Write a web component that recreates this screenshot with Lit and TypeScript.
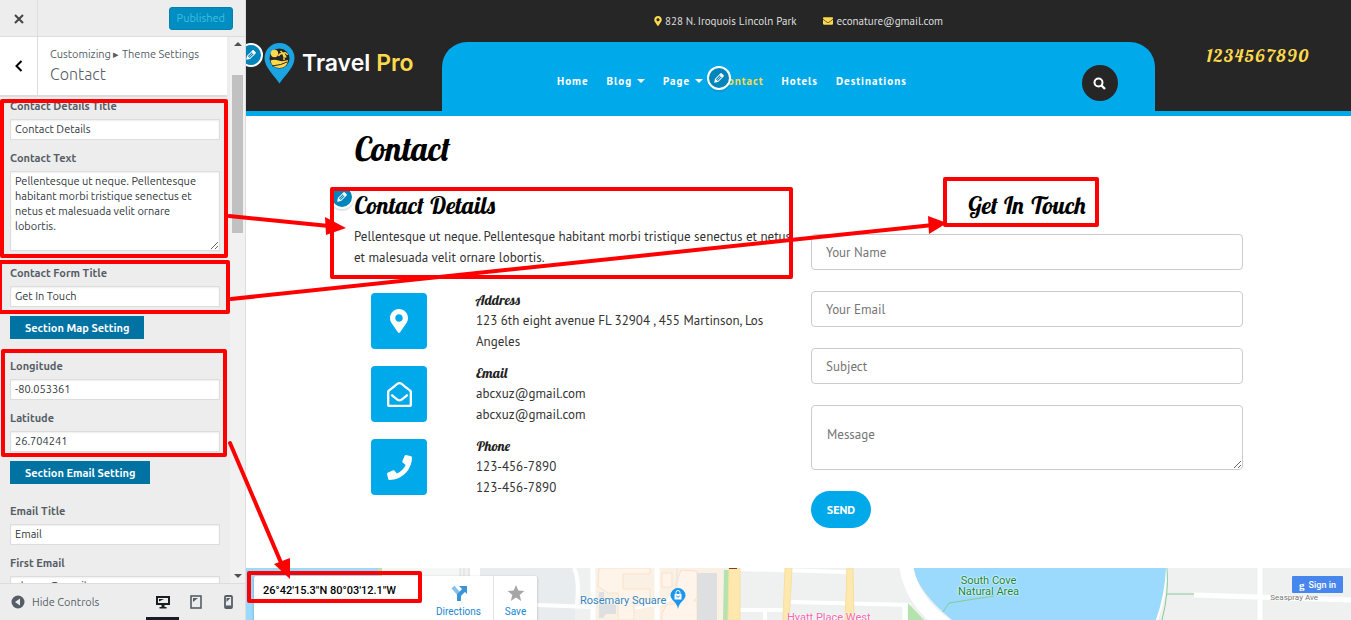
import { LitElement, html, css, svg } from "lit";
import { customElement } from "lit/decorators.js";

const pencil = html`<svg class="pencil" viewBox="0 0 20 20" width="14" height="14" aria-hidden="true">
  <path fill="currentColor" d="M13.89 3.39l2.71 2.72c.46.46.42 1.24.03 1.64l-8.01 8.02-5.56 1.16 1.16-5.58s7.6-7.63 7.99-8.03c.39-.39 1.22-.39 1.68.07zm-2.73 2.79l-5.59 5.61 1.11 1.11 5.54-5.65zm-2.97 8.23l5.58-5.6-1.07-1.08-5.59 5.6z"/>
</svg>`;

const markerPath = "M172.27 501.67C26.97 291.03 0 269.41 0 192 0 85.96 85.96 0 192 0s192 85.96 192 192c0 77.41-26.97 99.03-172.27 309.67-9.53 13.77-29.93 13.77-39.46 0zM192 272c44.18 0 80-35.82 80-80s-35.82-80-80-80-80 35.82-80 80 35.82 80 80 80z";
const envelopePath = "M502.3 190.8c3.9-3.1 9.7-.2 9.7 4.7V400c0 26.5-21.5 48-48 48H48c-26.5 0-48-21.5-48-48V195.600c0-5 5.700-7.800 9.700-4.700 22.400 17.400 52.100 39.500 154.100 113.600 21.100 15.400 56.700 47.800 92.200 47.600 35.700.300 72-32.800 92.300-47.600 102-74.100 131.600-96.300 154-113.700zM256 320c23.200.400 56.600-29.200 73.400-41.400 132.700-96.300 142.800-104.700 173.400-128.700 5.800-4.500 9.200-11.500 9.200-18.900v-19c0-26.500-21.500-48-48-48H48c-26.500 0-48 21.500-48 48v19c0 7.400 3.400 14.300 9.200 18.900 30.600 23.900 40.700 32.400 173.400 128.700 16.800 12.200 50.200 41.800 73.400 41.400z";
const phonePath = "M493.4 24.6l-104-24c-11.300-2.600-22.900 3.300-27.500 13.900l-48 112c-4.200 9.800-1.400 21.300 6.900 28l60.600 49.600c-36 76.700-98.900 140.500-177.200 177.200l-49.600-60.600c-6.800-8.300-18.200-11.100-28-6.900l-112 48C3.900 366.500-2 378.100.6 389.400l24 104C27.100 504.200 36.700 512 48 512c256.100 0 464-207.500 464-464 0-11.200-7.700-20.900-18.600-23.400z";
const openMailPath = "M494.59 164.52c-4.700-3.880-111.720-89.960-135.330-108.310C337.230 38.560 299.440 0 256 0c-43.210 0-80.640 38.200-103.270 56.210-24.500 19-131.040 104.690-135.220 108.140A48 48 0 0 0 0 201.480V464c0 26.510 21.490 48 48 48h416c26.510 0 48-21.490 48-48V201.510a48 48 0 0 0-17.410-36.990zM464 458a6 6 0 0 1-6 6H54a6 6 0 0 1-6-6V204.350c0-1.530.720-2.970 1.950-3.890 27.230-21.730 115.440-92.520 132.240-105.750C200.440 80.210 230.330 48 256 48c25.670 0 55.560 32.220 73.810 46.710 16.800 13.240 105.040 84.050 132.260 105.770a5 5 0 0 1 1.930 3.890V458zm-31.990-187.700c4.250 5.180 3.470 12.840-1.750 17.040-29.100 23.440-58.650 47.180-71.010 56.990C336.520 362.480 299.200 400 256 400c-43.450 0-81.290-38.240-103.250-55.670-11.750-9.320-41.740-33.430-71.010-57-5.210-4.200-5.990-11.860-1.740-17.030l15.240-18.540c4.180-5.080 11.660-5.850 16.790-1.730 28.640 23.050 58.620 47.130 70.550 56.600C200.140 320.570 230.260 352 256 352c25.490 0 55.230-30.900 73.440-45.370 11.930-9.470 41.900-33.550 70.550-56.600 5.130-4.120 12.610-3.360 16.780 1.720l15.240 18.550z";

@customElement("customizer-panel")
class CustomizerPanel extends LitElement {
  static styles = css`
    :host { display: flex; flex-direction: column; box-sizing: border-box; height: 100%; min-height: 0;
      background: #ededed; border-right: 1px solid #ddd; color: #555d66;
      font-family: Ubuntu, "Open Sans", "Noto Sans", sans-serif; font-size: 11px; }
    * { box-sizing: border-box; }
    button, input, textarea { font: inherit; margin: 0; }
    button { cursor: pointer; }
    .top { display: flex; height: 37px; flex: none; align-items: center; border-bottom: 1px solid #ddd; padding-right: 12px; }
    .icon { border: 0; background: none; padding: 0; display: flex; align-items: center; justify-content: center; }
    .close { width: 38px; height: 36px; padding-top: 2px; border-right: 1px solid #ddd; color: #444; }
    .published { margin-left: auto; height: 23px; padding: 0 7px; border: 1px solid #0081b0; border-radius: 3px; background: #008ec2; color: #40bfdf; }
    .main { display: flex; flex: 1; min-height: 0; }
    .pane { flex: 1; min-width: 0; display: flex; flex-direction: column; overflow: hidden; }
    .heading { display: flex; flex: none; height: 60px; margin-right: 3px; background: #fff; border-bottom: 2px solid #ddd; }
    .back { width: 38px; border-right: 1px solid #ddd; color: #000; flex: none; }
    .titles { padding: 9px 0 0 12px; white-space: nowrap; }
    .crumb { line-height: 17px; font-size: 11px; }
    h3 { margin: 0; font-size: 16px; font-weight: 300; line-height: 22px; }
    .form { padding: 1px 10px 0; }
    .field { margin-bottom: 10px; }
    .tall { margin-bottom: 14px; }
    .field label { display: block; line-height: 16px; margin-bottom: 5px; font-weight: 600; }
    input, textarea { display: block; width: 100%; border: 1px solid #ddd; background: #fff; color: #32373c; box-shadow: inset 0 1px 2px rgba(0,0,0,.07); border-radius: 0; }
    input { height: 21px; padding: 0 4px 2px; }
    textarea { height: 80px; padding: 2px 16px 2px 4px; line-height: 15px; resize: vertical; overflow: hidden; }
    .section { display: block; height: 23px; padding: 0 15px; margin: -1px 0 19px; border: 0; background: #0073a3; color: #fff; font-weight: 700; }
    .scroll { width: 15px; flex: none; background: #f1f1f1; display: flex; flex-direction: column; align-items: center; padding: 5px 0; }
    .arrow { width: 0; height: 0; border: 4px solid transparent; }
    .up { border-top-width: 0; border-bottom: 4px solid #505050; }
    .down { border-bottom-width: 0; border-top: 4px solid #505050; margin-top: auto; }
    .thumb { width: 11px; height: 158px; margin-top: 29px; background: #c1c1c1; }
    .bottom { display: flex; flex: none; height: 37px; border-top: 1px solid #ddd; padding-left: 11px; }
    .hide { gap: 7px; color: #555d66; }
    .devices { display: flex; margin-left: auto; }
    .device { width: 33px; border-bottom: 3px solid transparent; padding-top: 3px; color: #555d66; }
    .active { color: #191e23; border-bottom-color: #191e23; }
  `;
  field(id: string, label: string, value: string, area = false) {
    return html`<div class=${area ? "field tall" : "field"}><label for=${id}>${label}</label>
      ${area ? html`<textarea id=${id} .value=${value}></textarea>` : html`<input id=${id} type="text" .value=${value}>`}</div>`;
  }
  render() {
    return html`
      <div class="top">
        <button class="icon close" aria-label="Close"><svg width="10" height="10" viewBox="0 0 10 10"><path d="M1 1l8 8M9 1L1 9" stroke="currentColor" stroke-width="2"/></svg></button>
        <button class="published">Published</button>
      </div>
      <div class="main">
        <div class="pane">
          <div class="heading">
            <button class="icon back" aria-label="Back"><svg width="8" height="12" viewBox="0 0 8 12"><path d="M6.500 1L1.500 6l5 5" fill="none" stroke="currentColor" stroke-width="2"/></svg></button>
            <div class="titles"><div class="crumb">Customizing ▸ Theme Settings</div><h3>Contact</h3></div>
          </div>
          <div class="form">
            ${this.field("details", "Contact Details Title", "Contact Details")}
            ${this.field("text", "Contact Text", "Pellentesque ut neque. Pellentesque habitant morbi tristique senectus et netus et malesuada velit ornare lobortis.", true)}
            ${this.field("form-title", "Contact Form Title", "Get In Touch")}
            <button class="section">Section Map Setting</button>
            ${this.field("longitude", "Longitude", "-80.053361")}
            ${this.field("latitude", "Latitude", "26.704241")}
            <button class="section">Section Email Setting</button>
            ${this.field("email-title", "Email Title", "Email")}
            ${this.field("first-email", "First Email", "abcxuz@gmail.com")}
          </div>
        </div>
        <div class="scroll"><span class="arrow up"></span><span class="thumb"></span><span class="arrow down"></span></div>
      </div>
      <div class="bottom">
        <button class="icon hide"><svg width="14" height="14" viewBox="0 0 14 14"><circle cx="7" cy="7" r="6.500" fill="#555d66"/><path d="M9 3.500v7L4 7z" fill="#ededed"/></svg>Hide Controls</button>
        <div class="devices">
          <button class="icon device active" aria-label="Desktop"><svg width="14" height="14" viewBox="0 0 14 14"><path fill="currentColor" fill-rule="evenodd" d="M0 1h14v9H0zm2 2v5h10V3zM5.500 10h3v2h2v1.500h-7V12h2z"/><path fill="currentColor" d="M3 4h5L3 6.500z"/></svg></button>
          <button class="icon device" aria-label="Tablet"><svg width="12" height="14" viewBox="0 0 12 14"><rect x="1" y="1" width="10" height="12" fill="none" stroke="currentColor" stroke-width="1.600"/><path fill="currentColor" d="M3 3h5L3 7z"/></svg></button>
          <button class="icon device" aria-label="Phone"><svg width="9" height="14" viewBox="0 0 9 14"><rect x="1" y="1" width="7" height="12" rx="1" fill="none" stroke="currentColor" stroke-width="1.800"/><path fill="currentColor" d="M2.500 3h4l-4 4zM2 10.500h5V12H2z"/></svg></button>
        </div>
      </div>`;
  }
}

@customElement("location-map")
class LocationMap extends LitElement {
  static styles = css`
    :host { display: block; position: relative; overflow: hidden; background: #eff1f0; font-family: Roboto, sans-serif; font-size: 11px; }
    * { box-sizing: border-box; }
    .tiles { position: absolute; inset: 0; width: 100%; height: 100%; }
    .card { position: absolute; left: 8px; top: 8px; display: flex; height: 80px; width: 283px; background: #fff; border-radius: 2px; box-shadow: 0 1px 3px rgba(0,0,0,.25); }
    .coords { flex: 1; padding: 7px 0 0 9px; font-weight: 500; line-height: 16px; color: #000; white-space: nowrap; }
    .action { display: flex; flex-direction: column; align-items: center; gap: 4px; padding-top: 8px; height: 44px; font-size: 10px; line-height: 12px; color: #1a87d0; text-decoration: none; }
    .directions { width: 70px; border-right: 1px solid #e3e3e3; }
    .save { width: 43px; }
    .place { position: absolute; white-space: nowrap; line-height: 12px; text-shadow: 0 0 2px #fff, 0 0 2px #fff; }
    .square { left: 334px; top: 27px; color: #3584bb; }
    .cove { left: 712px; top: 7px; line-height: 11px; text-align: center; color: #14873b; }
    .hotel { left: 541px; top: 44px; color: #f368ac; }
    .street { right: 33px; top: 24px; font-size: 8px; color: #777; }
    .pin { position: absolute; left: 424px; top: 20px; }
    .signin { position: absolute; right: 8px; top: 8px; height: 17px; width: 51px; display: flex; align-items: center; justify-content: center; gap: 4px; padding: 0; border: 0; border-radius: 1px; background: #4787ed; color: #fff; font: 500 9px Roboto, sans-serif; }
    .g { font: 700 11px "Liberation Serif", serif; }
  `;
  render() {
    return html`
      <svg class="tiles" viewBox="0 0 1105 52" preserveAspectRatio="xMinYMin slice" aria-hidden="true">${svg`
        <path fill="#9bdafd" d="M0 0h134v52H0z"/><path fill="#b5e3ae" d="M132 0h4v52h-4z"/>
        <path fill="#f5f6f6" d="M136 0h78v52h-78z"/><path fill="#e9ecee" d="M234 0h95v52h-95z"/>
        <path stroke="#fff" stroke-width="10" d="M229 0v52"/><path stroke="#dcdfe1" stroke-width="1" d="M214 0v20M218 0v20M223 0v20"/>
        <path fill="none" stroke="#fff" stroke-width="4" d="M291 37l57 2M328 0q6 12 3 38"/>
        <path fill="#faf1e4" d="M350 0h60v52h-60zM413 0h64v52h-64z"/>
        <path fill="#fff4ea" stroke="#fae0cb" d="M353 0l-1 18 10 7h10v27h16V31h16V21h-27V6h27V0zM416 5h10v14h-10zM435 2l-6 17 7 8-3 9h-12l-5 9v8h35v-20h-3l3-4V3z"/>
        <path fill="#dedfe1" d="M451 5h20v47h-20zM353 24h5v10l12 3v9h-10l-3 4h-4z"/>
        <path stroke="#fff" stroke-width="5" d="M347 0v52M411 0v52"/>
        <path fill="none" stroke="#e2e4e6" d="M431 0v23"/>
        <path fill="none" stroke="#fff" stroke-width="3" d="M430 23q-6 13-24 14l-17 3"/>
        <path fill="#b5e3ae" d="M478 2h5v50h-6z"/>
        <path fill="none" stroke="#fff" stroke-width="4" d="M494 1l106 3M494 42h44M519 42v10M545 34l120 3"/>
        <path fill="#ffe8ad" stroke="#f6dfa0" stroke-width="1" d="M483 0h11v52h-12zM539 0h7l-3 52h-6zM601 0h6l1 52h-9z"/>
        <path fill="#9bdafd" d="M667 0Q672 24 706 52h204q11-26 11-52z"/>
        <path fill="none" stroke="#fff" stroke-width="14" d="M660-5Q663 32 702 59"/>
        <path fill="none" stroke="#fff" stroke-width="2" d="M921 0q-1 26-10 52"/>
        <path fill="#b5e3ae" d="M662 35l16 17h-16z"/>
        <path fill="none" stroke="#86c99a" stroke-width="1" d="M921 0q2 25-5 52M921 26h28M697 44l6-9 45-7"/>
        <path fill="none" stroke="#fff" stroke-width="5" d="M948 27l157 5M1014 0v52M659 36v16"/>
        <path fill="#823d22" d="M483 0h8v1h-8z"/>
      `}</svg>
      <span class="place square">Rosemary Square</span>
      <svg class="pin" width="16" height="22" viewBox="0 0 16 22" aria-hidden="true"><path fill="#1a96ee" d="M8 0a7.500 7.500 0 0 1 7.500 7.500C15.500 12 9 14 8 21 7 14 .5 12 .5 7.500A7.500 7.500 0 0 1 8 0z"/><path fill="#fff" d="M4.500 6h7v5.500h-7z"/><path fill="none" stroke="#fff" d="M6 6V4.500a2 2 0 0 1 4 0V6"/><path fill="none" stroke="#1a96ee" d="M6.300 8q1.700 2.500 3.400 0"/></svg>
      <span class="place hotel">Hyatt Place West</span>
      <span class="place cove">South Cove<br>Natural Area</span>
      <span class="place street">Seaspray Ave</span>
      <div class="card">
        <div class="coords">26°42'15.3"N 80°03'12.1"W</div>
        <a class="action directions" href="#"><svg width="18" height="18" viewBox="0 0 18 18"><path fill="none" stroke="#86c0ec" stroke-width="4" d="M3 3l6 7v7"/><path fill="none" stroke="#3b93d8" stroke-width="4" d="M9 17v-6l5-5"/><path fill="#3b93d8" d="M9 2h8v8z"/></svg>Directions</a>
        <a class="action save" href="#"><svg width="18" height="18" viewBox="0 0 18 18"><path fill="#a6a6a6" d="M9 1l2.300 5.500 6 .500-4.600 3.900L14.200 17 9 13.600 3.800 17l1.500-6.100L.7 7l6-.5z"/></svg>Save</a>
      </div>
      <button class="signin"><span class="g">g</span>Sign in</button>`;
  }
}

@customElement("site-preview")
class SitePreview extends LitElement {
  static styles = css`
    :host { display: flex; flex-direction: column; min-width: 0; min-height: 0; height: 100%; background: #fff; overflow: hidden;
      color: #333; font-family: "PT Sans", Lato, "Open Sans", sans-serif; font-size: 13px; line-height: 21px; }
    * { box-sizing: border-box; }
    a { color: inherit; text-decoration: none; }
    h1, h2, h3, p { margin: 0; }
    h1, h2, h3, .phone { font-family: "Lobster Two", "Liberation Serif", serif; font-style: italic; font-weight: 700; color: #000; }
    header { background: #262626; border-bottom: 5px solid #00a9ea; flex: none; color: #ddd; }
    .contacts { display: flex; justify-content: center; gap: 27px; height: 42px; align-items: center; font-size: 11px; }
    .contacts a { display: flex; align-items: center; gap: 3px; }
    .bar { display: grid; grid-template-columns: 11fr 40fr 11fr; height: 69px; }
    .brand { display: flex; gap: 7px; padding-left: 18px; align-items: start; position: relative; font: 600 23px/42px Inter, sans-serif; color: #fff; white-space: nowrap; }
    .brand svg.logo { flex: none; margin-top: 1px; }
    .accent { color: #fed94c; }
    .nav { display: flex; height: 74px; padding: 4px 37px 0 115px; align-items: center; background: #00a9ea; border-radius: 25px 25px 0 0; color: #fff; font-size: 11px; font-weight: 700; letter-spacing: 1px; }
    .links { display: flex; gap: 18px; white-space: nowrap; position: relative; }
    .drop::after { content: ""; display: inline-block; margin-left: 5px; vertical-align: 2px; border: 4px solid transparent; border-top-color: #fff; border-bottom: 0; }
    .spot { position: relative; }
    .search { margin: 4px 0 0 auto; width: 36px; height: 36px; padding: 0; border: 0; border-radius: 50%; background: #262626; display: flex; align-items: center; justify-content: center; }
    .phone { color: #fed94c; font-size: 18px; line-height: 28px; letter-spacing: 1px; padding-left: 10px; text-align: center; }
    .edit { position: absolute; z-index: 1; width: 24px; height: 24px; display: flex; align-items: center; justify-content: center; padding: 0; border: 2px solid #fff; border-radius: 50%; background: #0085ba; color: #fff; box-shadow: 0 2px 1px rgba(46,68,83,.15); }
    .edit-brand { left: -7px; top: 1px; }
    .edit-nav { left: -14px; top: -5px; }
    .edit-text { left: -24px; top: -5px; }
    main { padding: 13px 108px 40px; flex: none; }
    h1 { font-size: 33px; line-height: 40px; margin-bottom: 21px; }
    .columns { display: grid; grid-template-columns: 443fr 432fr; gap: 14px; }
    h2 { font-size: 24px; line-height: 30px; }
    .details { position: relative; }
    .details p { margin: 6px 0 22px; }
    .row { display: grid; grid-template-columns: 56px 1fr; column-gap: 49px; margin: 0 20px 10px 17px; min-height: 63px; }
    .tile { width: 56px; height: 56px; margin-top: 3px; display: flex; align-items: center; justify-content: center; background: #00a9ea; border-radius: 4px; color: #fff; }
    h3 { font-size: 14px; line-height: 20px; color: #222; }
    form { display: flex; flex-direction: column; gap: 21px; }
    form h2 { text-align: center; margin-bottom: -7px; }
    input, textarea { font: inherit; width: 100%; border: 1px solid #ccc; border-radius: 4px; padding: 1px 14px 0; background: #fff; }
    input { height: 36px; }
    textarea { height: 65px; padding: 18px 15px; resize: vertical; display: block; }
    ::placeholder { color: #757575; opacity: 1; }
    .send { align-self: start; width: 60px; height: 37px; border: 0; border-radius: 19px; background: #00a9ea; color: #fff; font: inherit; font-weight: 700; font-size: 12px; padding: 0; }
    location-map { flex: 1; min-height: 52px; }
  `;
  row(title: string, icon: unknown, lines: unknown) {
    return html`<div class="row"><div class="tile">${icon}</div><div><h3>${title}</h3>${lines}</div></div>`;
  }
  render() {
    return html`
      <header>
        <div class="contacts">
          <a href="#"><svg width="8" height="10" viewBox="0 0 384 512"><path fill="#fed94c" d=${markerPath}/></svg>828 N. Iroquois Lincoln Park</a>
          <a href="#"><svg width="10" height="10" viewBox="0 0 512 512"><path fill="#fed94c" d=${envelopePath}/></svg>econature@gmail.com</a>
        </div>
        <div class="bar">
          <div class="brand">
            <button class="edit edit-brand" aria-label="Edit logo">${pencil}</button>
            <svg class="logo" width="31" height="41" viewBox="0 0 31 41" aria-hidden="true">
              <path fill="#1ba4e2" d="M15.500 0A15 15 0 0 1 30.500 15C30.500 24 22 31 15.500 40.500 9 31 .5 24 .5 15A15 15 0 0 1 15.500 0z"/>
              <circle cx="15.500" cy="15.500" r="10" fill="#262626"/>
              <path fill="#fed94c" d="M6.500 17.500q4-1.500 8 0t9.500-.5q-1 8-8.500 8T6.500 17.500z"/><circle cx="10.500" cy="10.500" r="3.700" fill="#fed94c"/>
              <path fill="none" stroke="#fed94c" stroke-width="1.500" d="M20 17q.5-4-1-6.500m-4.500 2.500q1-3 4.500-2.500 3-2 4.500 1.500m-4.500-1.500q2 1 3 4m-3-4l-2.500-2.500"/>
              <path fill="none" stroke="#262626" d="M8 23q10-1 15-4"/>
            </svg>
            <span>Travel <span class="accent">Pro</span></span>
          </div>
          <nav class="nav">
            <div class="links">
              <a href="#">Home</a><a class="drop" href="#">Blog</a><a class="drop" href="#">Page</a>
              <span class="spot"><button class="edit edit-nav" aria-label="Edit menu">${pencil}</button><a class="accent" href="#">Contact</a></span>
              <a href="#">Hotels</a><a href="#">Destinations</a>
            </div>
            <button class="search" aria-label="Search"><svg width="13" height="13" viewBox="0 0 13 13"><circle cx="5.500" cy="5.500" r="4" fill="none" stroke="#fff" stroke-width="2"/><path d="M8.500 8.500l3.500 3.500" stroke="#fff" stroke-width="2.400"/></svg></button>
          </nav>
          <a class="phone" href="#">1234567890</a>
        </div>
      </header>
      <main>
        <h1>Contact</h1>
        <div class="columns">
          <section class="details">
            <button class="edit edit-text" aria-label="Edit contact details">${pencil}</button>
            <h2>Contact Details</h2>
            <p>Pellentesque ut neque. Pellentesque habitant morbi tristique senectus et netus et malesuada velit ornare lobortis.</p>
            ${this.row("Address", html`<svg width="18" height="24" viewBox="0 0 384 512"><path fill="currentColor" d=${markerPath}/></svg>`, "123 6th eight avenue FL 32904 , 455 Martinson, Los Angeles")}
            ${this.row("Email", html`<svg width="25" height="25" viewBox="0 0 512 512"><path fill="currentColor" d=${openMailPath}/></svg>`, html`abcxuz@gmail.com<br>abcxuz@gmail.com`)}
            ${this.row("Phone", html`<svg width="25" height="25" viewBox="0 0 512 512"><path fill="currentColor" d=${phonePath}/></svg>`, html`123-456-7890<br>123-456-7890`)}
          </section>
          <form @submit=${(e: Event) => e.preventDefault()}>
            <h2>Get In Touch</h2>
            <input type="text" aria-label="Your Name" placeholder="Your Name">
            <input type="email" aria-label="Your Email" placeholder="Your Email">
            <input type="text" aria-label="Subject" placeholder="Subject">
            <textarea aria-label="Message" placeholder="Message"></textarea>
            <button class="send">SEND</button>
          </form>
        </div>
      </main>
      <location-map></location-map>`;
  }
}

@customElement("app-root")
class AppRoot extends LitElement {
  static styles = css`
    :host { display: grid; grid-template-columns: 246px minmax(0, 1fr); grid-template-rows: minmax(0, 1fr); height: 100vh; position: relative; overflow: hidden; }
    .notes { position: absolute; z-index: 5; left: 0; top: 0; width: 100%; height: 100%; pointer-events: none; }
  `;
  render() {
    return html`
      <customizer-panel></customizer-panel>
      <site-preview></site-preview>
      <svg class="notes" aria-hidden="true">${svg`
        <g fill="none" stroke="#f00" stroke-width="4" stroke-linejoin="round" stroke-linecap="round">
          <rect x="2" y="101" width="224" height="155"/><rect x="0" y="262" width="228" height="50"/>
          <rect x="3" y="351" width="222" height="104"/><rect x="332" y="189" width="459" height="88"/>
          <rect x="945" y="179" width="152" height="46"/><rect x="249" y="573" width="171" height="28"/>
          <path d="M229 216l100 10M231 299l702-74M230 443l52 122"/>
        </g>
        <path fill="#f00" d="M325 217l21 11-20 7zM928 216l19 7-18 11zM274 564l16-6v21z"/>`}</svg>`;
  }
}
